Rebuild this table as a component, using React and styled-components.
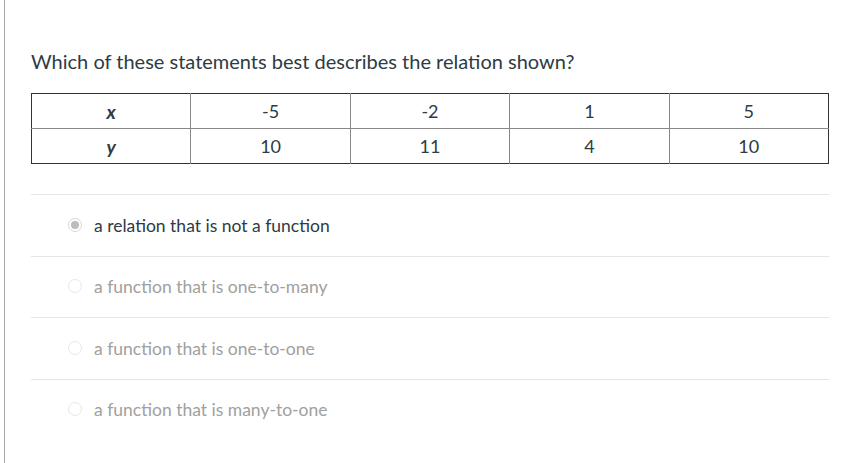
import React from "react";
import styled, { createGlobalStyle } from "styled-components";

const Global = createGlobalStyle`
  html, body { margin: 0; padding: 0; background: #fff; }
  body { font-family: Lato, "Open Sans", sans-serif; }
`;

const Page = styled.div`
  width: 854px;
  height: 463px;
  overflow: hidden;
  display: flex;
`;

const Frame = styled.div`
  margin-left: 4px;
  border-left: 1px solid #a8a8a8;
  height: 461px;
  width: 798px;
  padding: 49px 0 0 26px;
`;

const Question = styled.div`
  font-size: 20px;
  line-height: 24px;
  color: #2d3b45;
  margin: 0 0 20px 0;
`;

const Table = styled.table`
  width: 798px;
  border-collapse: collapse;
  border: 1.5px solid #333;
  table-layout: fixed;
  font-size: 18px;
  color: #2d3b45;
`;

const Cell = styled.td`
  height: 34px;
  padding: 0;
  text-align: center;
  vertical-align: middle;
  border-left: 1px solid #888;
  border-top: ${(p) => (p.$first ? "none" : "1px solid #888")};
  font-style: ${(p) => (p.$var ? "italic" : "normal")};
  font-weight: ${(p) => (p.$var ? 700 : 400)};
  font-size: ${(p) => (p.$var ? "19px" : "18px")};
  &:first-child { border-left: none; }
`;

const Options = styled.div`
  margin-top: 30px;
  width: 798px;
`;

const Option = styled.div`
  display: flex;
  align-items: center;
  height: 61.5px;
  border-top: 1px solid #e6e6e6;
  padding: 0 0 1px 37px;
  box-sizing: border-box;
  gap: 12px;
`;

const Radio = styled.span`
  width: 14px;
  height: 14px;
  border-radius: 50%;
  box-sizing: border-box;
  border: 1px solid ${(p) => (p.$checked ? "#d8d8d8" : "#e8e8e8")};
  display: flex;
  align-items: center;
  justify-content: center;
  background: #fff;
  &::after {
    content: "";
    width: 8px;
    height: 8px;
    border-radius: 50%;
    background: ${(p) => (p.$checked ? "#bdbdbd" : "transparent")};
  }
`;

const Label = styled.span`
  font-size: 17.5px;
  padding-top: 1px;
  color: ${(p) => (p.$checked ? "#2d3b45" : "#a0a0a0")};
`;

const xs = ["-5", "-2", "1", "5"];
const ys = ["10", "11", "4", "10"];
const options = [
  "a relation that is not a function",
  "a function that is one-to-many",
  "a function that is one-to-one",
  "a function that is many-to-one",
];

export default function App() {
  return (
    <Page>
      <Global />
      <Frame>
        <Question>Which of these statements best describes the relation shown?</Question>
        <Table>
          <tbody>
            <tr>
              <Cell $first $var>x</Cell>
              {xs.map((v, i) => (
                <Cell $first key={i}>{v}</Cell>
              ))}
            </tr>
            <tr>
              <Cell $var>y</Cell>
              {ys.map((v, i) => (
                <Cell key={i}>{v}</Cell>
              ))}
            </tr>
          </tbody>
        </Table>
        <Options>
          {options.map((o, i) => (
            <Option key={i}>
              <Radio $checked={i === 0} />
              <Label $checked={i === 0}>{o}</Label>
            </Option>
          ))}
        </Options>
      </Frame>
    </Page>
  );
}
